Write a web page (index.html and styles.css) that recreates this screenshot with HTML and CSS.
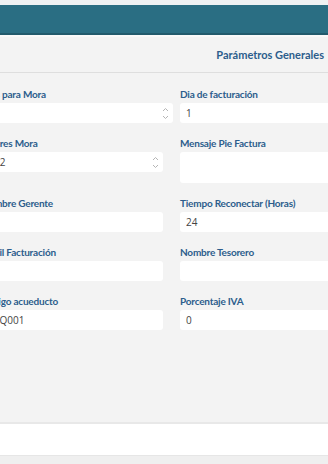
FILE: index.html
```html
<!DOCTYPE html>
<html lang="es">
<head>
    <meta charset="UTF-8">
    <meta name="viewport" content="width=device-width, initial-scale=1.0">
    <title>Parámetros Generales</title>
    <link rel="stylesheet" href="styles.css">
</head>
<body>
<div class="top-strip"></div>
<div class="navbar"></div>

<div class="page-header">
    <h3 class="page-title">Parámetros Generales</h3>
</div>

<div class="content">
    <form class="params-form">
        <div class="form-group">
            <label for="diasMora">Días para Mora</label>
            <div class="field spin-field field-wide">
                <input type="text" id="diasMora" class="spin-input" value="">
                <span class="spin">
                    <svg width="7" height="5" viewBox="0 0 7 5"><path d="M1 4 L3.5 1.5 L6 4" fill="none" stroke="#b5b5b5" stroke-width="1"/></svg>
                    <svg width="7" height="5" viewBox="0 0 7 5"><path d="M1 1 L3.5 3.5 L6 1" fill="none" stroke="#b5b5b5" stroke-width="1"/></svg>
                </span>
            </div>
        </div>
        <div class="form-group">
            <label for="diaFacturacion">Dia de facturación</label>
            <input type="text" id="diaFacturacion" class="field" value="1">
        </div>

        <div class="form-group">
            <label for="valoresMora">Valores Mora</label>
            <div class="field spin-field">
                <input type="text" id="valoresMora" class="spin-input field-indent" value="12">
                <span class="spin">
                    <svg width="7" height="5" viewBox="0 0 7 5"><path d="M1 4 L3.5 1.5 L6 4" fill="none" stroke="#b5b5b5" stroke-width="1"/></svg>
                    <svg width="7" height="5" viewBox="0 0 7 5"><path d="M1 1 L3.5 3.5 L6 1" fill="none" stroke="#b5b5b5" stroke-width="1"/></svg>
                </span>
            </div>
        </div>
        <div class="form-group">
            <label for="mensajePie">Mensaje Pie Factura</label>
            <textarea id="mensajePie" class="field field-area"></textarea>
        </div>

        <div class="form-group">
            <label for="nombreGerente">Nombre Gerente</label>
            <input type="text" id="nombreGerente" class="field" value="">
        </div>
        <div class="form-group">
            <label for="tiempoReconectar">Tiempo Reconectar (Horas)</label>
            <input type="text" id="tiempoReconectar" class="field" value="24">
        </div>

        <div class="form-group">
            <label for="emailFacturacion">Email Facturación</label>
            <input type="text" id="emailFacturacion" class="field" value="">
        </div>
        <div class="form-group">
            <label for="nombreTesorero">Nombre Tesorero</label>
            <input type="text" id="nombreTesorero" class="field" value="">
        </div>

        <div class="form-group">
            <label for="codigoAcueducto">Código acueducto</label>
            <input type="text" id="codigoAcueducto" class="field field-indent" value="EQ001">
        </div>
        <div class="form-group">
            <label for="porcentajeIva">Porcentaje IVA</label>
            <input type="text" id="porcentajeIva" class="field" value="0">
        </div>
    </form>
</div>

<div class="footer-bar"></div>
<div class="bottom-strip"></div>
</body>
</html>
```

FILE: styles.css
```css
/* Parametros generales - vista formulario */
html, body { margin: 0; padding: 0; }
body { font-family: Lato, "Open Sans", sans-serif; background-color: #f3f3f3; width: 328px; height: 464px; overflow: hidden; display: flex; flex-direction: column; }
.top-strip { height: 5px; background-color: #eef2f3; flex-shrink: 0; }
.navbar { height: 28px; background-color: #2a6e83; border-bottom: 2px solid #225a6c; flex-shrink: 0; }
.page-header { height: 35px; border-top: 2px solid #f9f9f9; border-bottom: 1px solid #dedede; display: flex; align-items: center; justify-content: flex-end; padding-right: 4px; flex-shrink: 0; }
.page-title { margin: 0; font-size: 11px; font-weight: 700; color: #2c5d8c; }
.content { flex: 1; overflow: hidden; }
.params-form { display: grid; grid-template-columns: 182px 190px; column-gap: 17px; row-gap: 14px; margin-left: -19px; padding-top: 15px; }
.form-group { display: flex; flex-direction: column; align-items: flex-start; }
label { font-size: 10px; font-weight: 700; color: #2c5d8c; line-height: 12px; margin-bottom: 3px; white-space: nowrap; letter-spacing: -0.2px; }
.field { box-sizing: border-box; width: 100%; height: 20px; border: none; border-radius: 3px; background-color: #fff; font-family: "Open Sans", sans-serif; font-size: 10px; color: #444; padding: 0 6px; outline: none; }
.field-indent { padding-left: 13px; }
.field-wide { width: calc(100% + 10px); }
.field-area { height: 31px; resize: none; }
.spin-field { display: flex; align-items: center; padding: 0 2px 0 0; }
.spin-input { flex: 1; min-width: 0; height: 100%; border: none; background: transparent; font-family: "Open Sans", sans-serif; font-size: 10px; color: #444; padding: 0 6px; outline: none; }
.spin-input.field-indent { padding-left: 13px; }
.spin { display: flex; flex-direction: column; gap: 3px; margin-right: 2px; }
.spin svg { display: block; }
.footer-bar { height: 31px; background-color: #fff; border-top: 2px solid #e8e8e8; flex-shrink: 0; }
.bottom-strip { height: 8px; background-color: #efefef; border-top: 1px solid #e6e6e6; flex-shrink: 0; }
```
